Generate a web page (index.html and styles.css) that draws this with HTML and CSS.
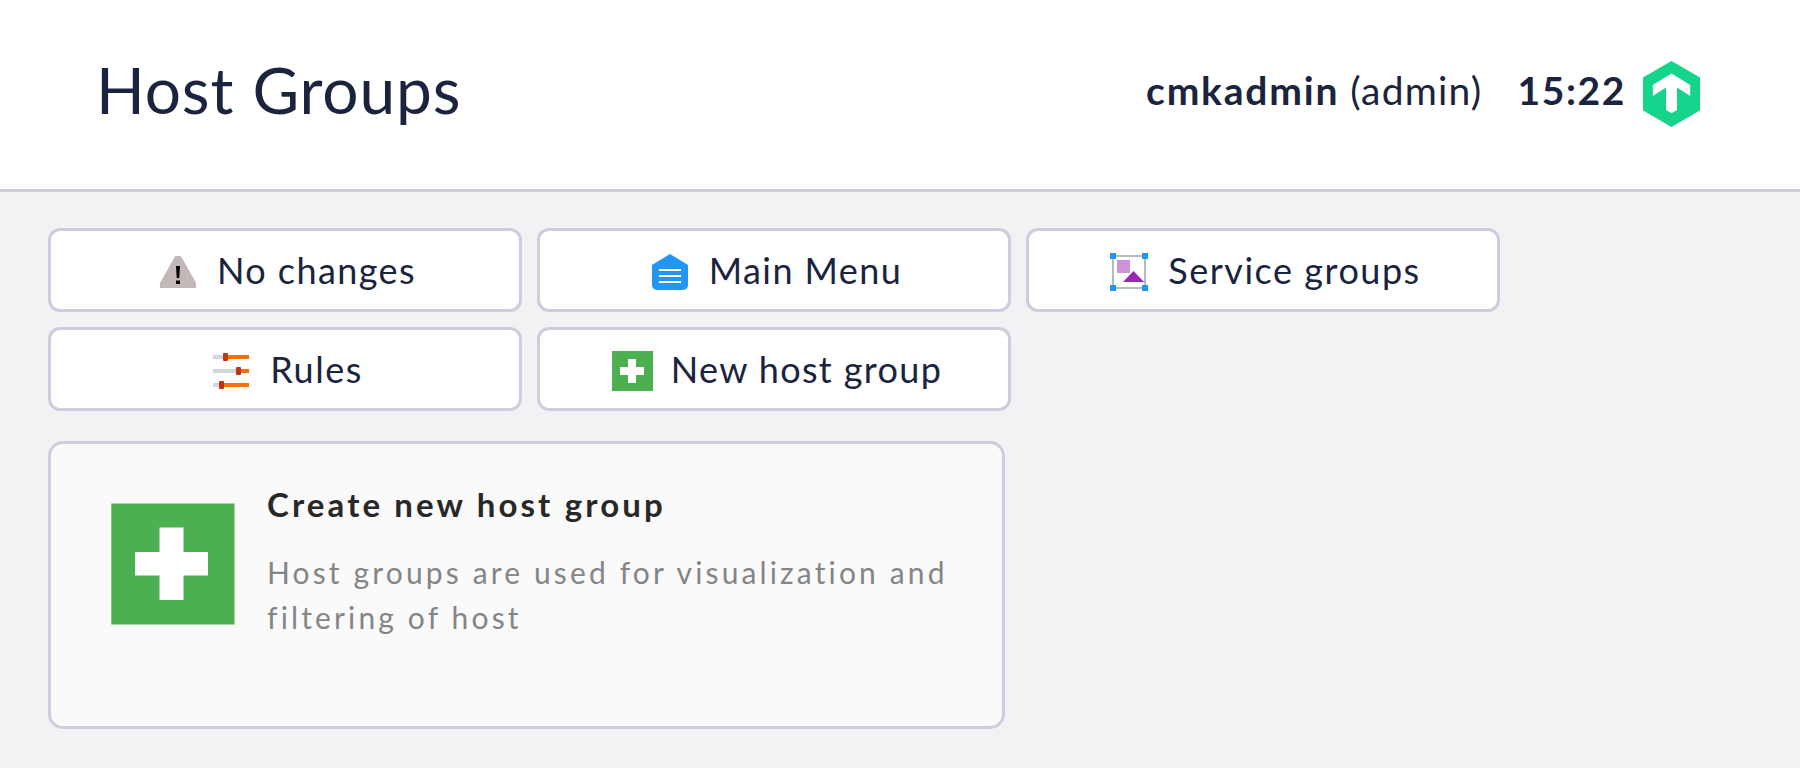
FILE: index.html
```html
<!DOCTYPE html>
<html lang="en">
<head>
<meta charset="utf-8">
<title>Host Groups</title>
<link rel="stylesheet" href="styles.css">
</head>
<body>
<header class="header">
  <h1 class="title">Host Groups</h1>
  <div class="session">
    <b class="user">cmkadmin</b>
    <span class="role">(admin)</span>
    <b class="clock">15:22</b>
    <svg class="logo" viewBox="0 0 57 66"><path fill="#15d58a" d="M28.5 0 57 16.5v33L28.5 66 0 49.500v-33z"/><path fill="#fff" d="M28.500 12.500 47.200 24v11L34 26.500V49l-5.500 3.200L23 49V26.500L9.800 35V24z"/></svg>
  </div>
</header>
<main class="content">
  <nav class="buttons">
    <a class="button"><svg class="icon" viewBox="0 0 48 48"><path fill="#c2b8b8" d="M22.500 9h3q1.500 0 2.200 1.400L42 36v5H6v-5L20.300 10.400Q21 9 22.500 9z"/><path d="M22 19h4l-.7 12h-2.600zM22 33.500h4V37h-4z"/></svg>No changes</a>
    <a class="button"><svg class="icon" viewBox="0 0 48 48"><path fill="#2196f3" d="M24 7 42 18v20a5 5 0 0 1-5 5H11a5 5 0 0 1-5-5V18z"/><path fill="#fff" d="M13 22h22v2H13zM13 28h22v2H13zM13 34h22v2H13z"/></svg>Main Menu</a>
    <a class="button button-loose"><svg class="icon icon-wide" viewBox="0 0 48 48"><path fill="none" stroke="#b0bec5" stroke-width="2" d="M8 9h32v32H8z"/><path fill="#ce93d8" d="M12 13h13v13H12z"/><path fill="#9c27b0" d="M28.500 24 39 35H18z"/><path fill="#2196f3" d="M5 6h6v6H5zM37 6h6v6h-6zM5 38h6v6H5zM37 38h6v6h-6z"/></svg>Service groups</a>
    <a class="button button-loose"><svg class="icon icon-wide" viewBox="0 0 48 48"><path fill="#cfd8dc" d="M6 9h12v4H6zM6 23h24v4H6zM6 37h8v4H6z"/><path fill="#ff6f00" d="M19 9h23v4H19zM32 23h10v4H32zM15 37h27v4H15z"/><path fill="#bf360c" d="M16 8q0-1 1-1h3q1 0 1 1v6q0 1-1 1h-3q-1 0-1-1zM29 22q0-1 1-1h3q1 0 1 1v6q0 1-1 1h-3q-1 0-1-1zM12 36q0-1 1-1h3q1 0 1 1v6q0 1-1 1h-3q-1 0-1-1z"/></svg>Rules</a>
    <a class="button button-new"><svg class="icon" viewBox="0 0 48 48"><path fill="#4caf50" d="M4 5h41v40H4z"/><path fill="#fff" d="M20 13h8v8h8v8h-8v8h-8v-8h-8v-8h8z"/></svg>New host group</a>
  </nav>
  <section class="card">
    <svg class="card-icon" viewBox="0 0 124 122"><path fill="#4caf50" d="M.3.500h123.200v121H.3z"/><path fill="#fff" d="M48.500 24.500h24v24.500H97v23.500H72.500V97h-24V72.500H24V49h24.500z"/></svg>
    <div class="card-text">
      <h2 class="card-title">Create new host group</h2>
      <p class="card-desc">Host groups are used for visualization and filtering of host</p>
    </div>
  </section>
</main>
</body>
</html>
```
FILE: styles.css
```css
* { box-sizing: border-box; }

body {
  margin: 0;
  height: 768px;
  overflow: hidden;
  background: #f0f2f4;
  color: #1a243e;
  font-family: Lato, sans-serif;
}

.header {
  display: flex;
  align-items: center;
  justify-content: space-between;
  height: 192px;
  padding: 0 100px 10px 96px;
  background: #fff;
  border-bottom: 3px solid #cdcddd;
}

.title {
  margin: 0;
  font-size: 64px;
  font-weight: 400;
  letter-spacing: 0.85px;
  word-spacing: 1px;
}

.session {
  display: flex;
  align-items: center;
  font-size: 39px;
}

.user { margin-right: 11px; letter-spacing: 1.8px; }
.role { margin-right: 35px; letter-spacing: 1.2px; }
.clock { margin-right: 17px; letter-spacing: 1.6px; }

.logo {
  width: 57px;
  height: 66px;
  margin-top: 8px;
}

.content { padding: 36px 48px; }

.buttons {
  display: grid;
  grid-template-columns: repeat(3, 474px);
  gap: 15px;
}

.button {
  display: flex;
  align-items: center;
  justify-content: center;
  gap: 15px;
  height: 84px;
  background: #fff;
  border: 3px solid #cdcddd;
  border-radius: 12px;
  font-size: 36px;
  letter-spacing: 1.42px;
}

.button-loose {
  padding-left: 1px;
  letter-spacing: 1.52px;
}

.button-new {
  padding-left: 2px;
  letter-spacing: 1.36px;
}

.icon {
  width: 48px;
  height: 48px;
  margin-top: 2px;
}

.icon-wide { margin-left: -1px; }

.card {
  display: flex;
  width: 957px;
  height: 288px;
  margin-top: 30px;
  padding: 38px 40px 0 60px;
  background: #fafafa;
  border: 3px solid #cdcddd;
  border-radius: 15px;
}

.card-icon {
  flex: none;
  width: 124px;
  height: 122px;
  margin: 21px 32px 0 0;
}

.card-title,
.card-desc {
  margin: 0;
  line-height: 45px;
}

.card-title {
  margin-bottom: 23px;
  color: #282828;
  font-size: 33px;
  letter-spacing: 3.12px;
}

.card-desc {
  color: #858585;
  font-size: 30px;
  letter-spacing: 3.14px;
}
```
